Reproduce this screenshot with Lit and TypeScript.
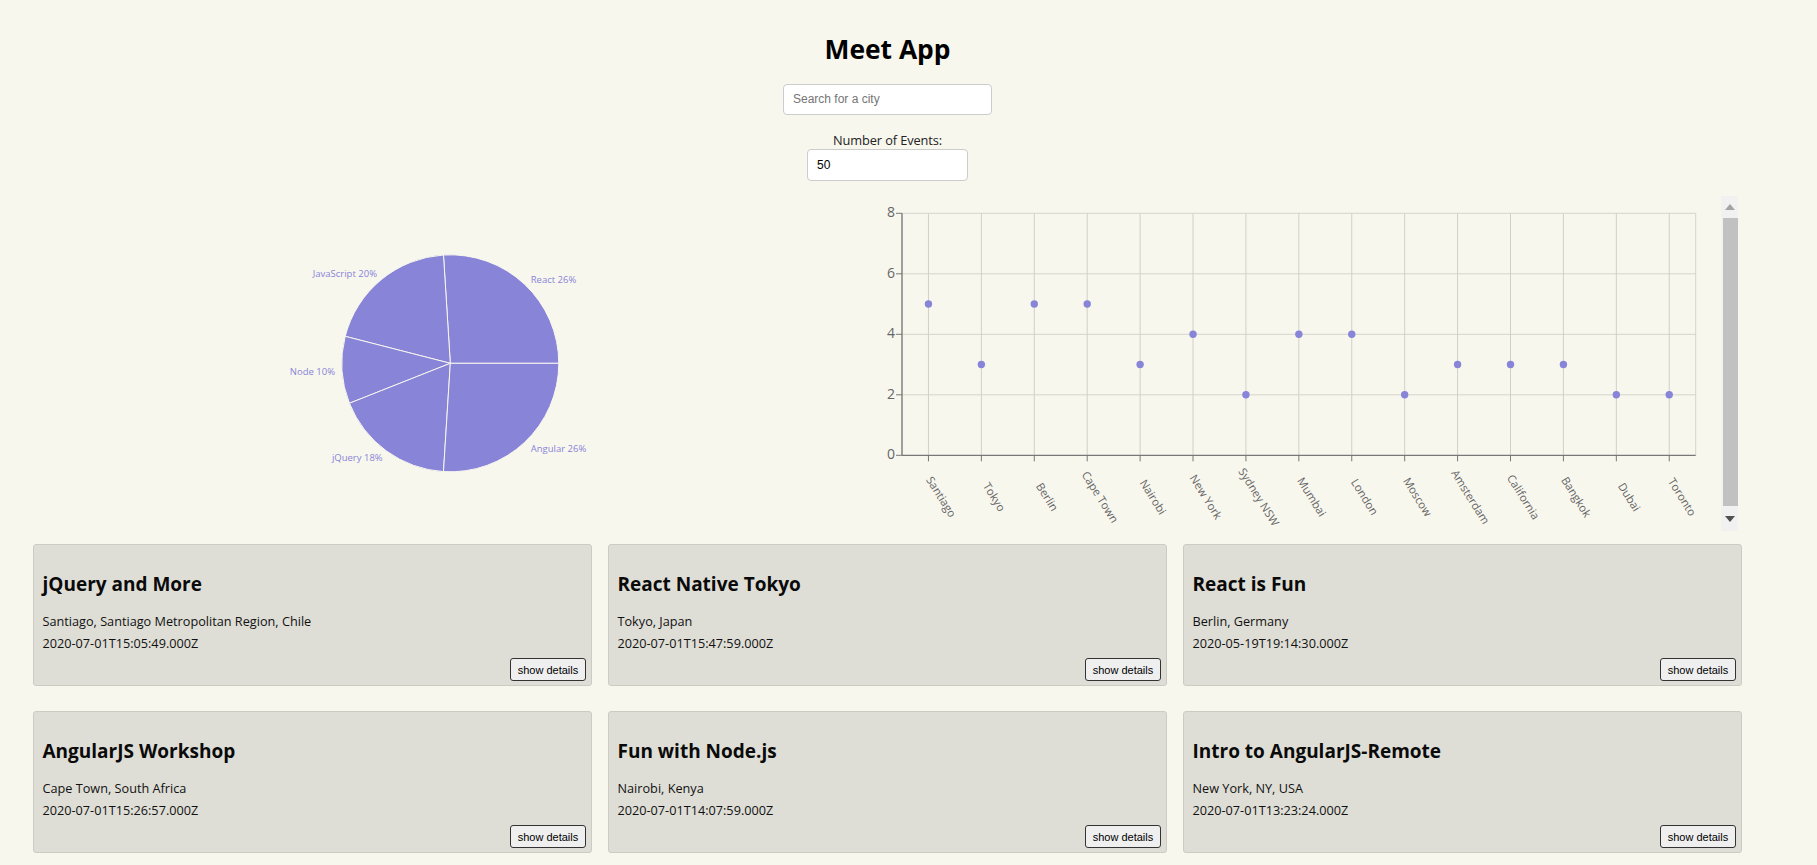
import { LitElement, html, css, svg } from "lit";
import { customElement } from "lit/decorators.js";

const EVENTS = [
  ["jQuery and More", "Santiago, Santiago Metropolitan Region, Chile", "2020-07-01T15:05:49.000Z"],
  ["React Native Tokyo", "Tokyo, Japan", "2020-07-01T15:47:59.000Z"],
  ["React is Fun", "Berlin, Germany", "2020-05-19T19:14:30.000Z"],
  ["AngularJS Workshop", "Cape Town, South Africa", "2020-07-01T15:26:57.000Z"],
  ["Fun with Node.js", "Nairobi, Kenya", "2020-07-01T14:07:59.000Z"],
  ["Intro to AngularJS-Remote", "New York, NY, USA", "2020-07-01T13:23:24.000Z"],
];
const CITIES: [string, number][] = [
  ["Santiago", 5], ["Tokyo", 3], ["Berlin", 5], ["Cape Town", 5], ["Nairobi", 3],
  ["New York", 4], ["Sydney NSW", 2], ["Mumbai", 4], ["London", 4], ["Moscow", 2],
  ["Amsterdam", 3], ["California", 3], ["Bangkok", 3], ["Dubai", 2], ["Toronto", 2],
];
const ANGLES = [0, 93.6, 165.6, 201.6, 266.4, 360];
const PIE_LABELS: [string, number, number, string][] = [
  ["React 26%", 497.7, 84.2, "start"],
  ["JavaScript 20%", 344, 78.8, "end"],
  ["Node 10%", 302, 176.2, "end"],
  ["jQuery 18%", 349.7, 262.2, "end"],
  ["Angular 26%", 497.7, 253.2, "start"],
];

const PX0 = 35, PX1 = 828.7, PY0 = 17.3, UNIT = 30.25;

@customElement("app-root")
export class AppRoot extends LitElement {
  static styles = css`
    :host { display: block; font-family: "Open Sans", "Noto Sans", sans-serif; color: #111; background: #f8f7ee; height: 865px; overflow: hidden; }
    .app { box-sizing: border-box; width: 1775px; padding: 0 33px; display: flex; flex-direction: column; align-items: center; }
    h1 { margin: 31px 0 17px; font-size: 26.4px; line-height: 36px; font-weight: 700; color: #000; }
    input { box-sizing: border-box; display: block; border: 1px solid #ccc; border-radius: 4px; background: #fff; font-family: "Liberation Sans", Arial, sans-serif; font-size: 12px; padding: 0 9px; color: #000; outline: none; }
    input::placeholder { color: #757575; }
    .search { width: 209px; height: 30.5px; }
    label { margin-top: 17px; font-size: 12.8px; line-height: 17px; letter-spacing: -0.1px; color: #222; }
    .count { width: 161px; height: 32px; }
    .charts { margin-top: 15.5px; align-self: stretch; display: grid; grid-template-columns: 834px 871px; height: 335px; }
    .pie, .scatter { display: block; }
    .right { display: flex; }
    .tick { font-size: 11.3px; fill: #666; }
    .ytick { font-size: 14px; fill: #666; }
    .plabel { font-size: 9.5px; fill: #8884d8; }
    .sb { width: 17px; height: 335px; background: #f1f1f1; display: flex; flex-direction: column; align-items: center; }
    .arrow { height: 22px; display: flex; align-items: center; justify-content: center; flex: none; }
    .arrow.down { height: 25px; }
    .thumb { flex: 1; align-self: stretch; margin-left: 2px; background: #c1c1c1; }
    .sb svg { display: block; }
    .cards { margin-top: 13px; align-self: stretch; display: grid; grid-template-columns: repeat(3, 559px); column-gap: 16px; row-gap: 25px; }
    .card { box-sizing: border-box; height: 142px; background: #deded6; border: 1px solid #ccccc4; border-radius: 3px; padding: 24px 5px 4px 8.5px; display: flex; flex-direction: column; }
    h2 { margin: 0 0 12.5px; font-size: 19px; line-height: 30px; font-weight: 700; color: #0a0a0a; }
    p { margin: 0 0 3.5px; font-size: 12.7px; line-height: 19px; color: #111; }
    button { align-self: flex-end; margin-top: auto; box-sizing: border-box; width: 76px; height: 23px; padding: 0; border: 1px solid #333; border-radius: 3px; background: #efefef; font-family: "Liberation Sans", Arial, sans-serif; font-size: 11px; color: #000; }
  `;

  pie() {
    const cx = 417.3, cy = 167.3, r = 108.5;
    const pt = (a: number) => [cx + r * Math.cos((a * Math.PI) / 180), cy - r * Math.sin((a * Math.PI) / 180)];
    return svg`<svg class="pie" width="834" height="335">
      ${ANGLES.slice(0, -1).map((a, i) => {
        const [x1, y1] = pt(a), [x2, y2] = pt(ANGLES[i + 1]);
        return svg`<path d="M${cx} ${cy}L${x1} ${y1}A${r} ${r} 0 0 0 ${x2} ${y2}Z" fill="#8884d8" stroke="#f8f7ee" stroke-width="1"></path>`;
      })}
      ${PIE_LABELS.map(([t, x, y, a]) => svg`<text class="plabel" x=${x} y=${y} text-anchor=${a} dominant-baseline="middle">${t}</text>`)}
    </svg>`;
  }

  scatter() {
    const step = (PX1 - PX0) / CITIES.length;
    const py = (v: number) => PY0 + (8 - v) * UNIT;
    return svg`<svg class="scatter" width="854" height="335">
      ${[8, 6, 4, 2].map((v) => svg`<line x1=${PX0} x2=${PX1} y1=${py(v)} y2=${py(v)} stroke="#d4d4cc"></line>`)}
      ${CITIES.map((_, i) => svg`<line x1=${PX0 + step * (i + 0.5)} x2=${PX0 + step * (i + 0.5)} y1=${PY0} y2=${py(0)} stroke="#d0d0ca"></line>`)}
      <line x1=${PX1} x2=${PX1} y1=${PY0} y2=${py(0)} stroke="#d4d4cc"></line>
      <line x1=${PX0} x2=${PX0} y1=${PY0} y2=${py(0)} stroke="#888" stroke-width="1.6"></line>
      <line x1=${PX0} x2=${PX1} y1=${py(0)} y2=${py(0)} stroke="#777" stroke-width="1.2"></line>
      ${[8, 6, 4, 2, 0].map((v) => svg`
        <line x1=${PX0 - 6} x2=${PX0} y1=${py(v)} y2=${py(v)} stroke="#777"></line>
        <text class="ytick" x=${PX0 - 7} y=${py(v)} text-anchor="end" dominant-baseline="middle">${v}</text>`)}
      ${CITIES.map(([c, v], i) => {
        const x = PX0 + step * (i + 0.5);
        return svg`
        <line x1=${x} x2=${x} y1=${py(0)} y2=${py(0) + 6} stroke="#777"></line>
        <text class="tick" text-anchor="middle" dominant-baseline="middle" transform="translate(${x + 12} 301.5) rotate(58)">${c}</text>
        <circle cx=${x} cy=${py(v)} r="3.7" fill="#8884d8"></circle>`;
      })}
    </svg>`;
  }

  render() {
    return html`<div class="app">
      <h1>Meet App</h1>
      <input class="search" type="text" placeholder="Search for a city" />
      <label>Number of Events:</label>
      <input class="count" type="text" .value=${"50"} />
      <div class="charts">
        ${this.pie()}
        <div class="right">
          ${this.scatter()}
          <div class="sb">
            <div class="arrow"><svg width="10" height="6"><path d="M5 0L10 6H0Z" fill="#a3a3a3"></path></svg></div>
            <div class="thumb"></div>
            <div class="arrow down"><svg width="10" height="6"><path d="M0 0H10L5 6Z" fill="#505050"></path></svg></div>
          </div>
        </div>
      </div>
      <div class="cards">
        ${EVENTS.map(([t, l, d]) => html`<div class="card">
          <h2>${t}</h2><p>${l}</p><p>${d}</p>
          <button>show details</button>
        </div>`)}
      </div>
    </div>`;
  }
}
